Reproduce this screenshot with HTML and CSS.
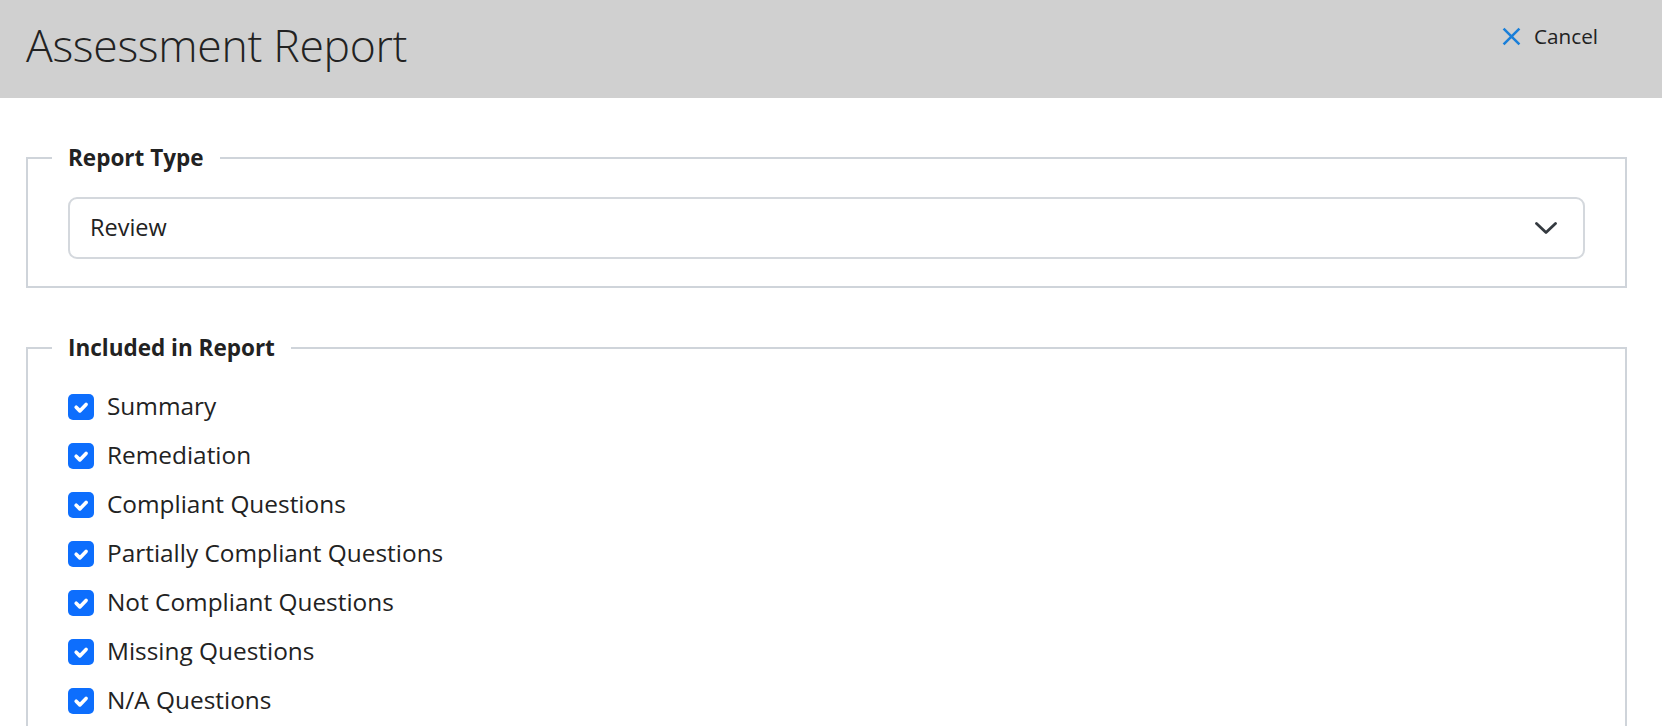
FILE: index.html
```html
<!DOCTYPE html>
<html>
  <head>
    <title>Assessment Report</title>
    <meta http-equiv="content-type" content="text/html;charset=utf-8">
    <link rel="stylesheet" href="styles.css">
  </head>
  <body>
    <div class="header">
      <h1 class="title">Assessment Report</h1>
      <a class="cancel" href="#">
        <svg class="cancel-icon" viewBox="0 0 18 18" width="19" height="19">
          <path d="M1.5 1.5l15 15M16.5 1.5l-15 15" stroke="#1a7fd9" stroke-width="2.4" fill="none"/>
        </svg>
        <span>Cancel</span>
      </a>
    </div>
    <div class="main">
      <fieldset class="group">
        <legend>Report Type</legend>
        <div class="select">
          <span>Review</span>
          <svg class="chevron" viewBox="0 0 22 12" width="22" height="12">
            <path d="M1.5 1.5l9.5 9l9.5-9" stroke="#343a40" stroke-width="2.8" fill="none" stroke-linecap="round" stroke-linejoin="round"/>
          </svg>
        </div>
      </fieldset>

      <fieldset class="group">
        <legend>Included in Report</legend>
        <ul class="checks">
          <li><span class="box"><svg viewBox="0 0 20 20" width="26" height="26"><path d="M6.3 10.2l2.8 2.8l4.8-5" stroke="#fff" stroke-width="2.8" fill="none" stroke-linecap="round" stroke-linejoin="round"/></svg></span>Summary</li>
          <li><span class="box"><svg viewBox="0 0 20 20" width="26" height="26"><path d="M6.3 10.2l2.8 2.8l4.8-5" stroke="#fff" stroke-width="2.8" fill="none" stroke-linecap="round" stroke-linejoin="round"/></svg></span>Remediation</li>
          <li><span class="box"><svg viewBox="0 0 20 20" width="26" height="26"><path d="M6.3 10.2l2.8 2.8l4.8-5" stroke="#fff" stroke-width="2.8" fill="none" stroke-linecap="round" stroke-linejoin="round"/></svg></span>Compliant Questions</li>
          <li><span class="box"><svg viewBox="0 0 20 20" width="26" height="26"><path d="M6.3 10.2l2.8 2.8l4.8-5" stroke="#fff" stroke-width="2.8" fill="none" stroke-linecap="round" stroke-linejoin="round"/></svg></span>Partially Compliant Questions</li>
          <li><span class="box"><svg viewBox="0 0 20 20" width="26" height="26"><path d="M6.3 10.2l2.8 2.8l4.8-5" stroke="#fff" stroke-width="2.8" fill="none" stroke-linecap="round" stroke-linejoin="round"/></svg></span>Not Compliant Questions</li>
          <li><span class="box"><svg viewBox="0 0 20 20" width="26" height="26"><path d="M6.3 10.2l2.8 2.8l4.8-5" stroke="#fff" stroke-width="2.8" fill="none" stroke-linecap="round" stroke-linejoin="round"/></svg></span>Missing Questions</li>
          <li><span class="box"><svg viewBox="0 0 20 20" width="26" height="26"><path d="M6.3 10.2l2.8 2.8l4.8-5" stroke="#fff" stroke-width="2.8" fill="none" stroke-linecap="round" stroke-linejoin="round"/></svg></span>N/A Questions</li>
        </ul>
      </fieldset>
    </div>
  </body>
</html>
```

FILE: styles.css
```css
body {
  font: 22px/1.5 "Open Sans", "Noto Sans", Arial, sans-serif;
  margin: 0;
  color: #212529;
  background: #fff;
}

.header {
  display: flex;
  align-items: center;
  justify-content: space-between;
  height: 98px;
  padding: 0 64px 0 26px;
  background: #d0d0d0;
  box-sizing: border-box;
}

.title {
  margin: 0 0 8px 0;
  font-size: 44.5px;
  font-weight: 300;
  color: #222;
  letter-spacing: -0.3px;
}

.cancel {
  display: flex;
  align-items: center;
  gap: 13px;
  margin-bottom: 24px;
  color: #222;
  font-size: 20.7px;
  text-decoration: none;
}

.main {
  padding: 43px 35px 0 26px;
}

.group {
  margin: 0 0 43px 0;
  padding: 0 40px 27px 40px;
  border: 2px solid #cfd4da;
}

.group legend {
  margin-left: -16px;
  padding: 0 16px;
  font-size: 22.5px;
  line-height: 34px;
  font-weight: 700;
  color: #222;
}

.select {
  display: flex;
  align-items: center;
  justify-content: space-between;
  height: 62px;
  margin-top: 22px;
  padding: 0 26px 0 20px;
  border: 2px solid #d4d8dd;
  border-radius: 9px;
  box-sizing: border-box;
  font-size: 23.5px;
  color: #222;
}

.chevron {
  display: block;
}

.checks {
  margin: 17px 0 0 0;
  padding: 0;
}

.checks li {
  display: flex;
  align-items: center;
  gap: 13px;
  height: 49px;
  list-style: none;
  font-size: 24.4px;
  color: #222;
}

.box {
  display: block;
  width: 26px;
  height: 26px;
  border-radius: 5px;
  background: #0d6efd;
}

.box svg {
  display: block;
}
```
